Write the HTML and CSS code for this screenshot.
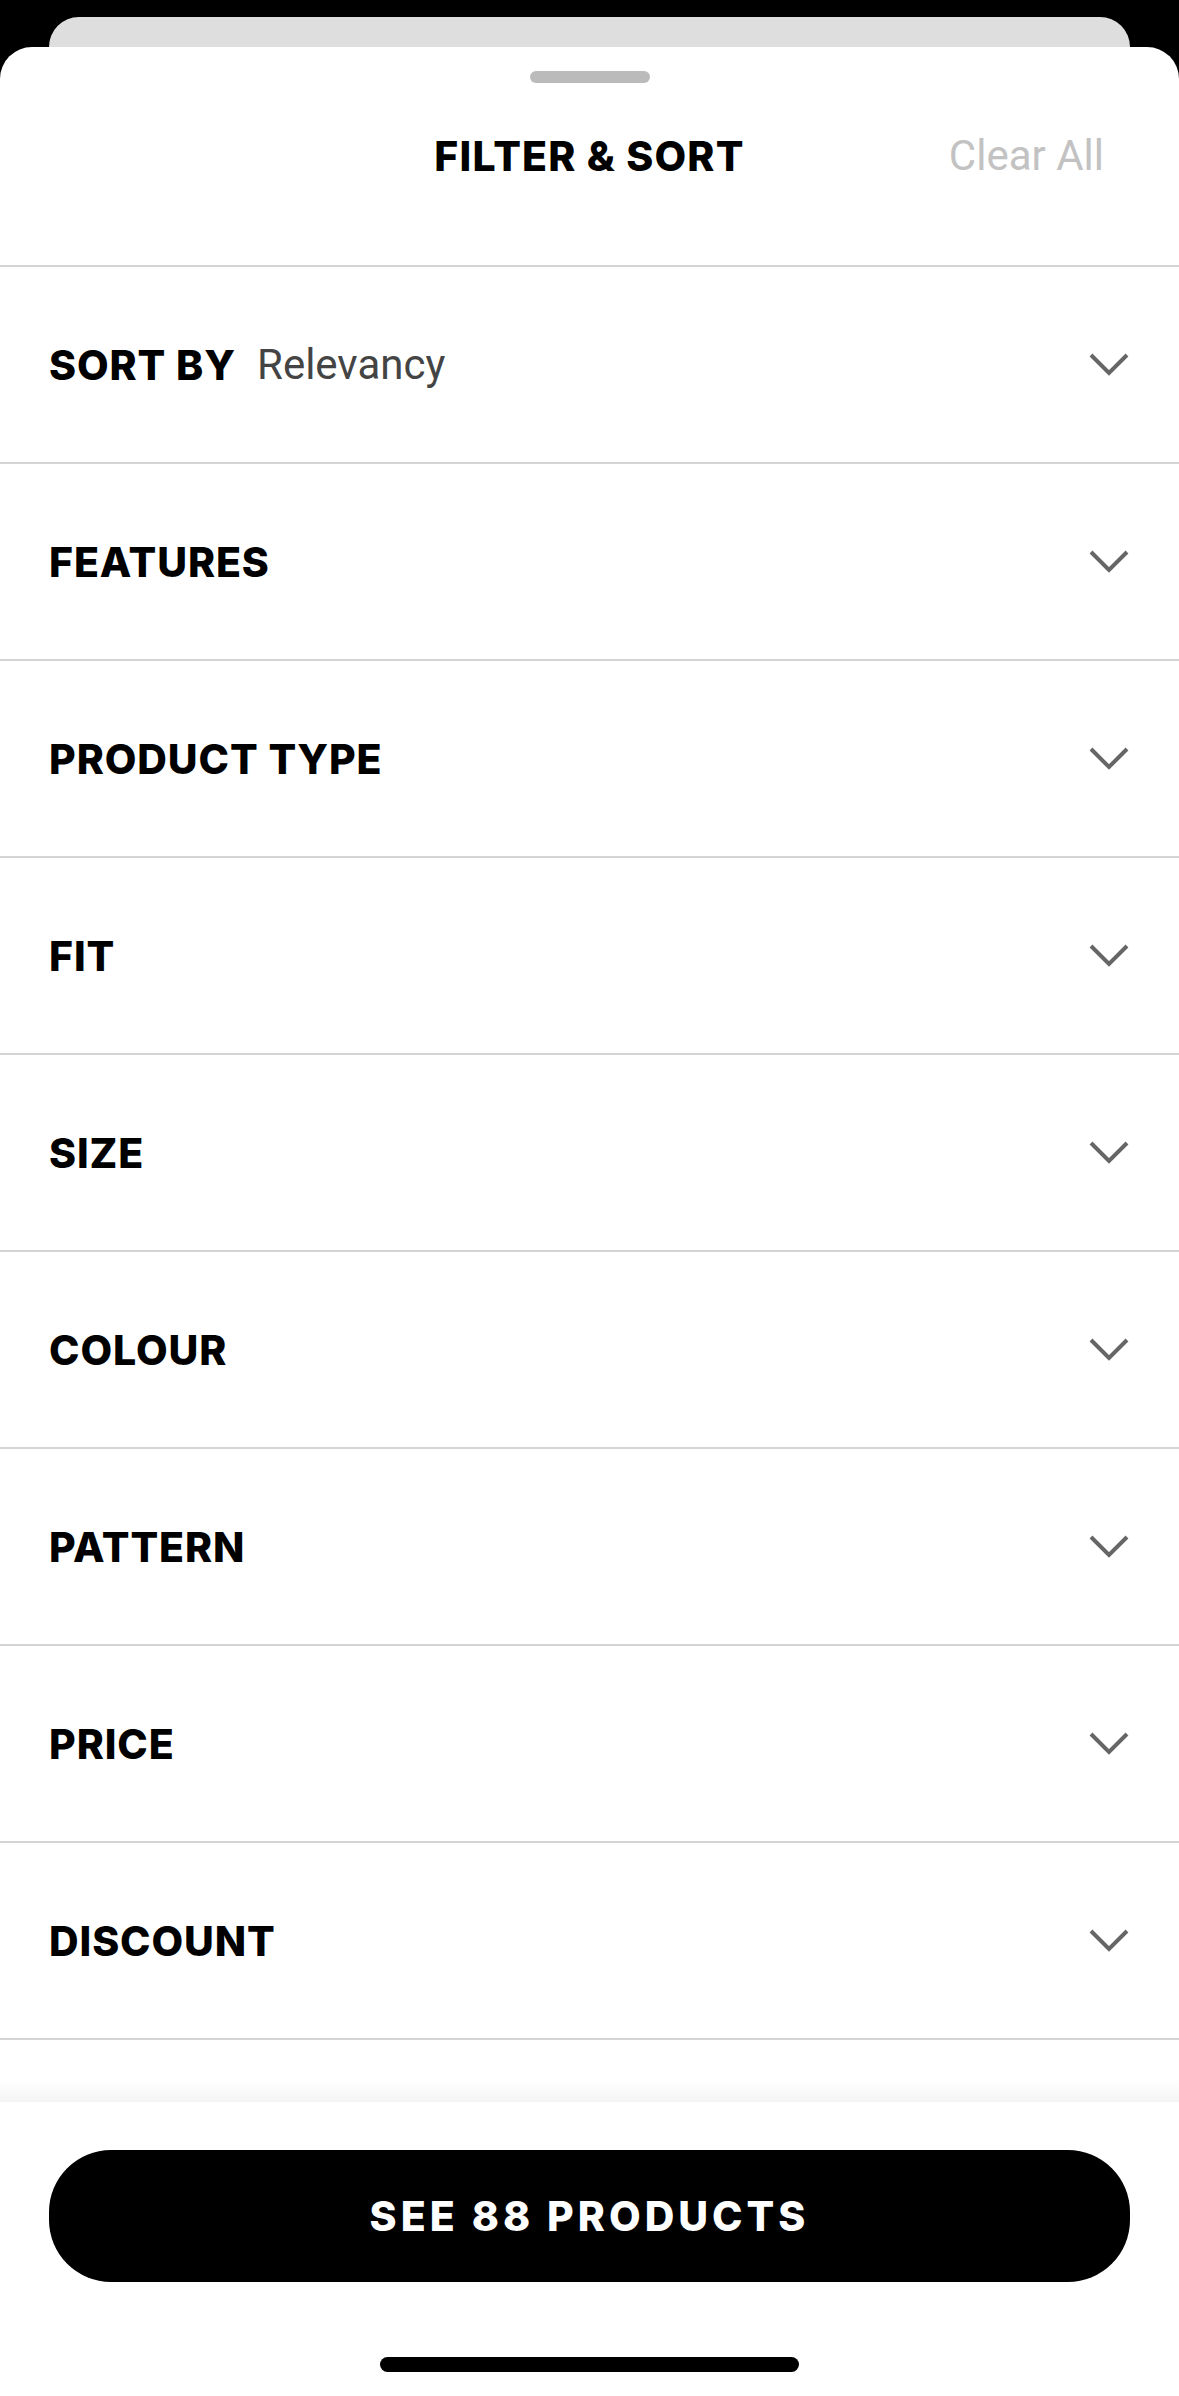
FILE: index.html
```html
<!DOCTYPE html>
<html>
<head>
<meta name="viewport" content="width=device-width, initial-scale=1.0" />
<link rel="stylesheet" href="styles.css">
</head>
<body>
<div id="screen">
	<div class="behind"></div>
	<div class="sheet">
		<div class="grabber"></div>
		<div class="head">
			<span></span>
			<h1 class="title">FILTER &amp; SORT</h1>
			<a class="clear" href="#">Clear All</a>
		</div>
		<div class="list">
			<div class="row"><span class="label">SORT BY</span><span class="value">Relevancy</span><svg class="chev" viewBox="0 0 40 23"><polyline points="2,2 20,20 38,2"/></svg></div>
			<div class="row"><span class="label">FEATURES</span><svg class="chev" viewBox="0 0 40 23"><polyline points="2,2 20,20 38,2"/></svg></div>
			<div class="row"><span class="label">PRODUCT TYPE</span><svg class="chev" viewBox="0 0 40 23"><polyline points="2,2 20,20 38,2"/></svg></div>
			<div class="row"><span class="label">FIT</span><svg class="chev" viewBox="0 0 40 23"><polyline points="2,2 20,20 38,2"/></svg></div>
			<div class="row"><span class="label">SIZE</span><svg class="chev" viewBox="0 0 40 23"><polyline points="2,2 20,20 38,2"/></svg></div>
			<div class="row"><span class="label">COLOUR</span><svg class="chev" viewBox="0 0 40 23"><polyline points="2,2 20,20 38,2"/></svg></div>
			<div class="row"><span class="label">PATTERN</span><svg class="chev" viewBox="0 0 40 23"><polyline points="2,2 20,20 38,2"/></svg></div>
			<div class="row"><span class="label">PRICE</span><svg class="chev" viewBox="0 0 40 23"><polyline points="2,2 20,20 38,2"/></svg></div>
			<div class="row"><span class="label">DISCOUNT</span><svg class="chev" viewBox="0 0 40 23"><polyline points="2,2 20,20 38,2"/></svg></div>
		</div>
		<div class="foot">
			<button class="see" type="button">SEE 88 PRODUCTS</button>
			<div class="homebar"></div>
		</div>
	</div>
</div>
</body>
</html>
```

FILE: styles.css
```css
html, body {margin:0px; padding:0px;}
body {
	background: #000;
	font-family: Inter, "Liberation Sans", sans-serif;
}
#screen {
	height: 100vh;
	display: flex;
	flex-direction: column;
	overflow: hidden;
}

/* card peeking out behind the sheet */
.behind {
	height: 30px;
	margin: 17px 49px 0;
	background: #dedede;
	border-radius: 30px 30px 0 0;
	flex: none;
}

.sheet {
	flex: 1;
	background: #fff;
	border-radius: 32px 32px 0 0;
	display: flex;
	flex-direction: column;
	min-height: 0;
}
.grabber {
	width: 120px;
	height: 12px;
	margin: 24px auto 0;
	border-radius: 6px;
	background: #bbbbbb;
}

.head {
	height: 184px;
	display: grid;
	grid-template-columns: 1fr auto 1fr;
	align-items: start;
	padding-top: 48px;
	box-sizing: border-box;
	border-bottom: 2px solid #d4d4d4;
}
.title {
	margin: 0;
	font-size: 41px;
	line-height: 50px;
	font-weight: 800;
	color: #000;
	letter-spacing: 1.2px;
}
.clear {
	justify-self: end;
	padding-right: 75px;
	font-family: Roboto, sans-serif;
	font-size: 42px;
	line-height: 50px;
	color: #c2c2c2;
	text-decoration: none;
}

.list {
	flex: 1;
	min-height: 0;
	overflow: hidden;
}
.row {
	height: 197px;
	box-sizing: border-box;
	padding: 0 50px 0 49px;
	display: flex;
	align-items: center;
	border-bottom: 2px solid #d4d4d4;
}
.label {
	font-size: 41px;
	font-weight: 800;
	color: #000;
	letter-spacing: 0.9px;
}
.value {
	margin-left: 21px;
	font-family: Roboto, sans-serif;
	font-size: 42px;
	color: #444;
}
.chev {
	margin-left: auto;
	width: 40px;
	height: 23px;
	fill: none;
	stroke: #666;
	stroke-width: 4;
}

.foot {
	position: relative;
	background: #fff;
	padding: 48px 49px 0;
	flex: none;
}
.foot:before {
	content: "";
	position: absolute;
	left: 0;
	right: 0;
	top: -22px;
	height: 22px;
	background: linear-gradient(rgba(240,240,240,0), rgba(240,240,240,0.7));
}
.see {
	display: block;
	width: 100%;
	height: 132px;
	border: none;
	border-radius: 62px;
	background: #000;
	color: #fff;
	font-family: Inter, sans-serif;
	font-size: 41px;
	font-weight: 800;
	letter-spacing: 4px;
	cursor: pointer;
}
.homebar {
	width: 419px;
	height: 15px;
	margin: 75px auto 24px;
	border-radius: 8px;
	background: #000;
}
```
